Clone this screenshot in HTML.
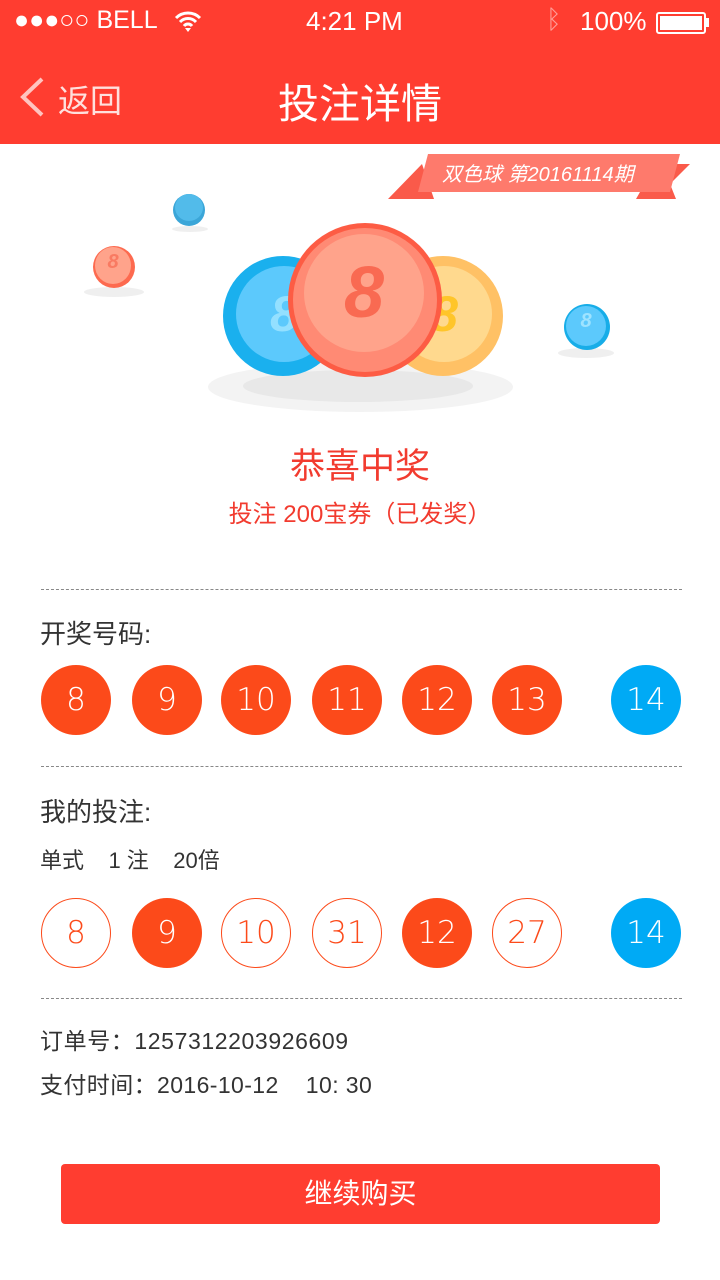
<!DOCTYPE html>
<html><head><meta charset="utf-8"><style>
*{margin:0;padding:0;box-sizing:border-box}
body{width:720px;height:1280px;background:#fff;font-family:"Liberation Sans","Noto Sans CJK SC",sans-serif;position:relative;overflow:hidden}
.abs{position:absolute}
.hdr{left:0;top:0;width:720px;height:144px;background:#ff3d30;color:#fff}
.ball{position:absolute;width:70px;height:70px;border-radius:50%;text-align:center;line-height:70px;font-size:31px;font-family:"DejaVu Sans",sans-serif;font-weight:300}
.r{background:#fc4a1a;color:#fff}
.b{background:#00aaf5;color:#fff}
.o{border:1px solid #fc4a1a;color:#fc4a1a;background:#fff;line-height:68px}
.dash{left:41px;width:641px;border-top:1px dashed #888}
.c{border-radius:50%;position:absolute}
.t{color:#333;font-size:25px}
</style></head><body>
<div class="abs hdr">
 <div class="abs" style="left:14px;top:6px;font-size:25px">●●●○○ BELL</div>
 <svg class="abs" style="left:174px;top:10px" width="28" height="22" viewBox="0 0 28 22"><path d="M2 8a17 17 0 0 1 24 0M6 12a11 11 0 0 1 16 0M10 16a5 5 0 0 1 8 0" stroke="#fff" stroke-width="3" fill="none"/><path d="M11 18l3 4 3-4z" fill="#fff"/></svg>
 <div class="abs" style="left:306px;top:6px;font-size:26px">4:21 PM</div>
 <div class="abs" style="left:546px;top:4px;font-size:26px;color:#ff9d96">ᛒ</div>
 <div class="abs" style="left:580px;top:6px;font-size:26px">100%</div>
 <div class="abs" style="left:656px;top:12px;width:50px;height:22px;border:2px solid #fff;border-radius:3px;padding:2px"><div style="background:#fff;width:100%;height:100%"></div></div>
 <div class="abs" style="left:706px;top:18px;width:3px;height:9px;background:#fff"></div>
 <svg class="abs" style="left:18px;top:76px" width="28" height="42" viewBox="0 0 28 42"><path d="M24 3L5 21l19 18" stroke="#ffc4bf" stroke-width="4" fill="none"/></svg>
 <div class="abs" style="left:58px;top:76px;font-size:32px;color:#ffe0dd">返回</div>
 <div class="abs" style="left:0;width:720px;text-align:center;top:70px;font-size:41px">投注详情</div>
</div>
<svg class="abs" style="left:386px;top:154px" width="306" height="48" viewBox="0 0 306 48"><polygon points="36,10 2,45 48,45" fill="#fa5a4a"/><polygon points="270,10 304,10 284,30 290,45 250,45" fill="#fa5a4a"/><polygon points="42,0 294,0 284,38 32,38" fill="#fe7a6c"/><text x="56" y="27" fill="#fff" font-size="20" font-style="italic" font-family="Liberation Sans,Noto Sans CJK SC,sans-serif">双色球 第20161114期</text></svg>
<div class="c" style="left:208px;top:362px;width:305px;height:50px;background:#f3f3f3"></div>
<div class="c" style="left:243px;top:370px;width:230px;height:32px;background:#e8e8e8"></div>
<div class="c" style="left:84px;top:287px;width:60px;height:10px;background:#efefef"></div>
<div class="c" style="left:558px;top:348px;width:56px;height:10px;background:#efefef"></div>
<div class="c" style="left:172px;top:226px;width:36px;height:6px;background:#efefef"></div>
<div class="c" style="left:223px;top:256px;width:120px;height:120px;background:#1ab0ee"></div>
<div class="c" style="left:236px;top:266px;width:96px;height:96px;background:#5cc9fc;color:#94e0ff;font:italic bold 50px 'Liberation Sans';text-align:center;line-height:96px">8</div>
<div class="c" style="left:383px;top:256px;width:120px;height:120px;background:#ffc165"></div>
<div class="c" style="left:396px;top:266px;width:96px;height:96px;background:#ffd98e;color:#ffc52a;font:italic bold 50px 'Liberation Sans';text-align:center;line-height:96px">8</div>
<div class="c" style="left:288px;top:223px;width:154px;height:154px;background:#fd5c44"></div>
<div class="c" style="left:293px;top:228px;width:144px;height:144px;background:#ff8a74"></div>
<div class="c" style="left:304px;top:234px;width:120px;height:118px;background:#ffa38b;color:#f96a52;font:italic bold 72px 'Liberation Sans';text-align:center;line-height:118px">8</div>
<div class="c" style="left:173px;top:194px;width:32px;height:32px;background:#3ba6d8"></div>
<div class="c" style="left:175px;top:194px;width:28px;height:27px;background:#52bbea"></div>
<div class="c" style="left:93px;top:246px;width:42px;height:42px;background:#fd6a4f"></div>
<div class="c" style="left:95px;top:247px;width:36px;height:37px;background:#ffa38b;color:#f97a62;font:italic bold 20px 'Liberation Sans';text-align:center;line-height:30px">8</div>
<div class="c" style="left:564px;top:304px;width:46px;height:46px;background:#17ade8"></div>
<div class="c" style="left:566px;top:306px;width:40px;height:40px;background:#5cc9fc;color:#9ee3ff;font:italic bold 20px 'Liberation Sans';text-align:center;line-height:30px">8</div>
<div class="abs" style="left:0;width:720px;text-align:center;top:438px;font-size:35px;color:#f23b2f">恭喜中奖</div>
<div class="abs" style="left:0;width:720px;text-align:center;top:494px;font-size:24px;color:#f23b2f">投注 200宝券（已发奖）</div>
<div class="abs dash" style="top:589px"></div>
<div class="abs t" style="left:40px;top:614px;font-size:26px">开奖号码:</div>
<div class="ball r" style="left:41px;top:665px">8</div>
<div class="ball r" style="left:132px;top:665px">9</div>
<div class="ball r" style="left:221px;top:665px">10</div>
<div class="ball r" style="left:312px;top:665px">11</div>
<div class="ball r" style="left:402px;top:665px">12</div>
<div class="ball r" style="left:492px;top:665px">13</div>
<div class="ball b" style="left:611px;top:665px">14</div>
<div class="abs dash" style="top:766px"></div>
<div class="abs t" style="left:40px;top:792px;font-size:26px">我的投注:</div>
<div class="abs t" style="left:40px;top:843px;font-size:22px;white-space:pre">单式    1 注    20倍</div>
<div class="ball o" style="left:41px;top:898px">8</div>
<div class="ball r" style="left:132px;top:898px">9</div>
<div class="ball o" style="left:221px;top:898px">10</div>
<div class="ball o" style="left:312px;top:898px">31</div>
<div class="ball r" style="left:402px;top:898px">12</div>
<div class="ball o" style="left:492px;top:898px">27</div>
<div class="ball b" style="left:611px;top:898px">14</div>
<div class="abs dash" style="top:998px"></div>
<div class="abs t" style="left:40px;top:1022px;font-size:23px;letter-spacing:0.6px">订单号：1257312203926609</div>
<div class="abs t" style="left:40px;top:1066px;font-size:23px;white-space:pre;letter-spacing:0.4px">支付时间：2016-10-12    10: 30</div>
<div class="abs" style="left:61px;top:1164px;width:599px;height:60px;background:#ff3d30;border-radius:4px;color:#fff;font-size:28px;text-align:center;line-height:60px">继续购买</div>
</body></html>
